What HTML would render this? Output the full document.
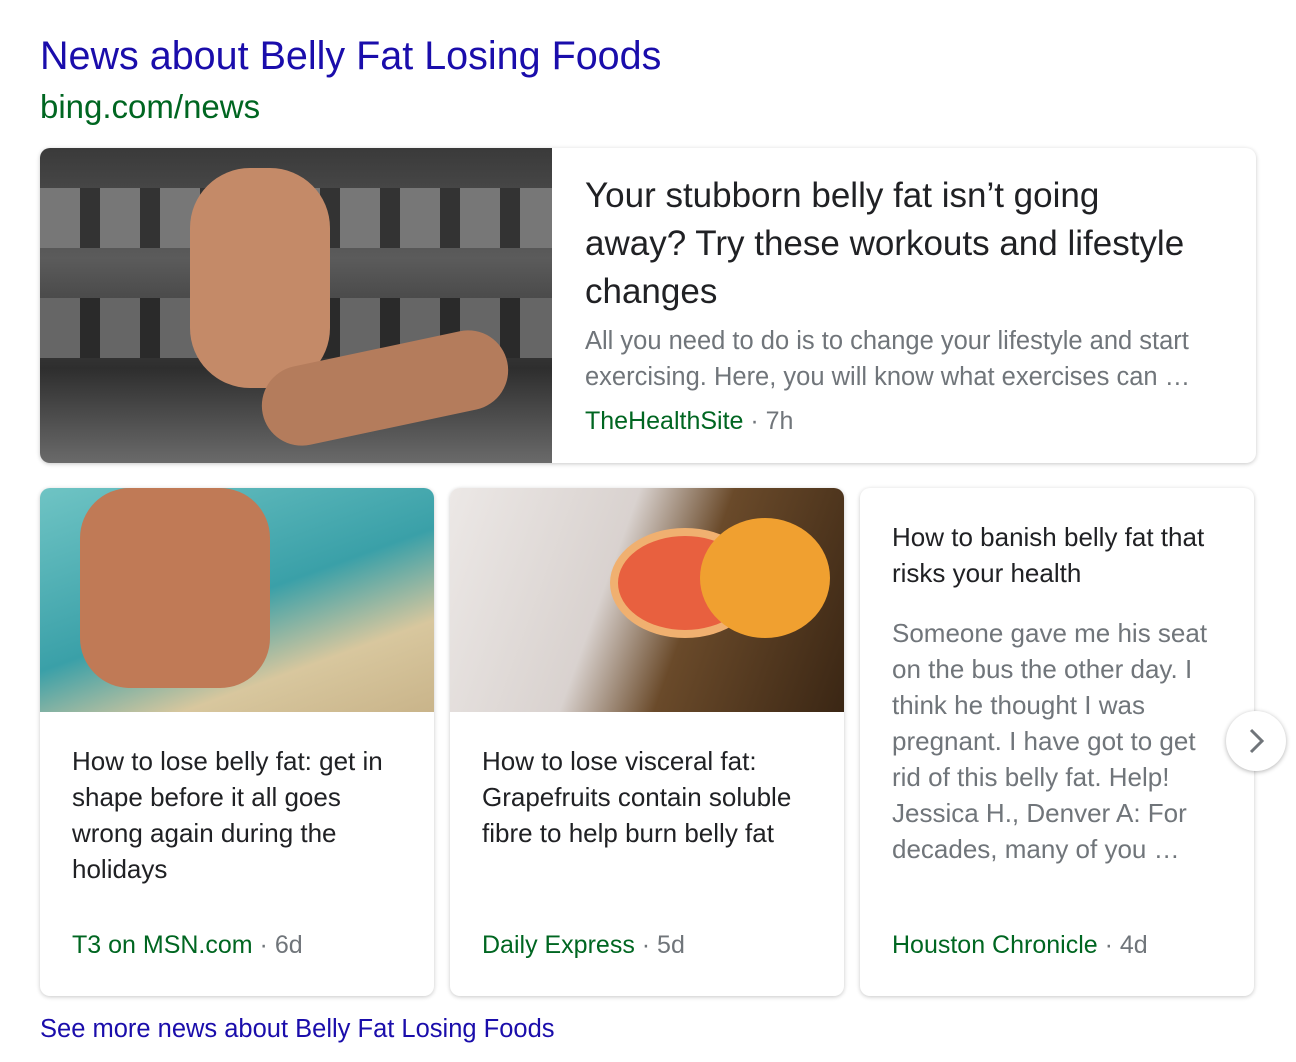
<!DOCTYPE html>
<html><head><meta charset="utf-8"><style>
*{margin:0;padding:0;box-sizing:border-box}
body{width:1296px;height:1062px;background:#fff;font-family:"Liberation Sans",Arial,sans-serif;position:relative;overflow:hidden}
.a{position:absolute}
.card{position:absolute;background:#fff;border-radius:10px;box-shadow:0 1px 4px rgba(0,0,0,.22);overflow:hidden}
.t{color:#202124}
.g{color:#70757a}
.src{color:#006621}
</style></head><body>
<div class="a" style="left:40px;top:32px;font-size:39.5px;color:#1a0dab;line-height:48px">News about Belly Fat Losing Foods</div>
<div class="a" style="left:40px;top:88px;font-size:33px;color:#006621;line-height:38px">bing.com/news</div>

<div class="card" style="left:40px;top:148px;width:1216px;height:315px">
  <div class="a" style="left:0;top:0;width:512px;height:315px;background:linear-gradient(180deg,#3a3a3a 0%,#5b5b5b 35%,#2e2e2e 70%,#6a6a6a 100%)">
    <div class="a" style="left:0;top:40px;width:512px;height:60px;background:repeating-linear-gradient(90deg,#777 0 40px,#333 40px 60px)"></div>
    <div class="a" style="left:0;top:150px;width:512px;height:60px;background:repeating-linear-gradient(90deg,#666 0 40px,#2a2a2a 40px 60px)"></div>
    <div class="a" style="left:150px;top:20px;width:140px;height:220px;border-radius:60px;background:#c48a68"></div>
    <div class="a" style="left:220px;top:200px;width:250px;height:80px;border-radius:40px;background:#b47c5c;transform:rotate(-12deg)"></div>
  </div>
  <div class="a t" style="left:545px;top:24px;width:640px;font-size:35px;line-height:48px">Your stubborn belly fat isn’t going<br>away? Try these workouts and lifestyle changes</div>
  <div class="a g" style="left:545px;top:175px;width:650px;font-size:25.5px;line-height:36px">All you need to do is to change your lifestyle and start exercising. Here, you will know what exercises can …</div>
  <div class="a" style="left:545px;top:255px;font-size:25px;line-height:36px"><span class="src">TheHealthSite</span><span class="g"> · 7h</span></div>
</div>

<div class="card" style="left:40px;top:488px;width:394px;height:508px">
  <div class="a" style="left:0;top:0;width:394px;height:224px;background:linear-gradient(160deg,#6fc4c4 0%,#3aa0a8 50%,#d8c79e 75%,#c9b48a 100%)">
    <div class="a" style="left:40px;top:0;width:190px;height:200px;border-radius:50px;background:#c07a56"></div>
  </div>
  <div class="a t" style="left:32px;top:255px;width:330px;font-size:26px;line-height:36px">How to lose belly fat: get in shape before it all goes wrong again during the holidays</div>
  <div class="a" style="left:32px;top:439px;font-size:25px;line-height:36px"><span class="src">T3 on MSN.com</span><span class="g"> · 6d</span></div>
</div>

<div class="card" style="left:450px;top:488px;width:394px;height:508px">
  <div class="a" style="left:0;top:0;width:394px;height:224px;background:linear-gradient(110deg,#ece8e6 0%,#d9d2cf 40%,#6a4a2a 60%,#3a2614 100%)">
    <div class="a" style="left:160px;top:40px;width:150px;height:110px;border-radius:50%;background:#e8603f;border:8px solid #f0b070"></div>
    <div class="a" style="left:250px;top:30px;width:130px;height:120px;border-radius:50%;background:#f0a030"></div>
  </div>
  <div class="a t" style="left:32px;top:255px;width:340px;font-size:26px;line-height:36px">How to lose visceral fat: Grapefruits contain soluble fibre to help burn belly fat</div>
  <div class="a" style="left:32px;top:439px;font-size:25px;line-height:36px"><span class="src">Daily Express</span><span class="g"> · 5d</span></div>
</div>

<div class="card" style="left:860px;top:488px;width:394px;height:508px">
  <div class="a t" style="left:32px;top:31px;width:340px;font-size:26px;line-height:36px">How to banish belly fat that risks your health</div>
  <div class="a g" style="left:32px;top:127px;width:320px;font-size:26px;line-height:36px">Someone gave me his seat on the bus the other day. I think he thought I was pregnant. I have got to get rid of this belly fat. Help! Jessica H., Denver A: For decades, many of you …</div>
  <div class="a" style="left:32px;top:439px;font-size:25px;line-height:36px"><span class="src">Houston Chronicle</span><span class="g"> · 4d</span></div>
</div>

<div class="a" style="left:1226px;top:711px;width:60px;height:60px;border-radius:50%;background:#fff;box-shadow:0 1px 5px rgba(0,0,0,.3)">
  <svg width="60" height="60" viewBox="0 0 60 60"><path d="M25 19 L36 30 L25 41" fill="none" stroke="#70757a" stroke-width="3"/></svg>
</div>

<div class="a" style="left:40px;top:1012px;font-size:25.5px;color:#1a0dab;line-height:34px">See more news about Belly Fat Losing Foods</div>
</body></html>
